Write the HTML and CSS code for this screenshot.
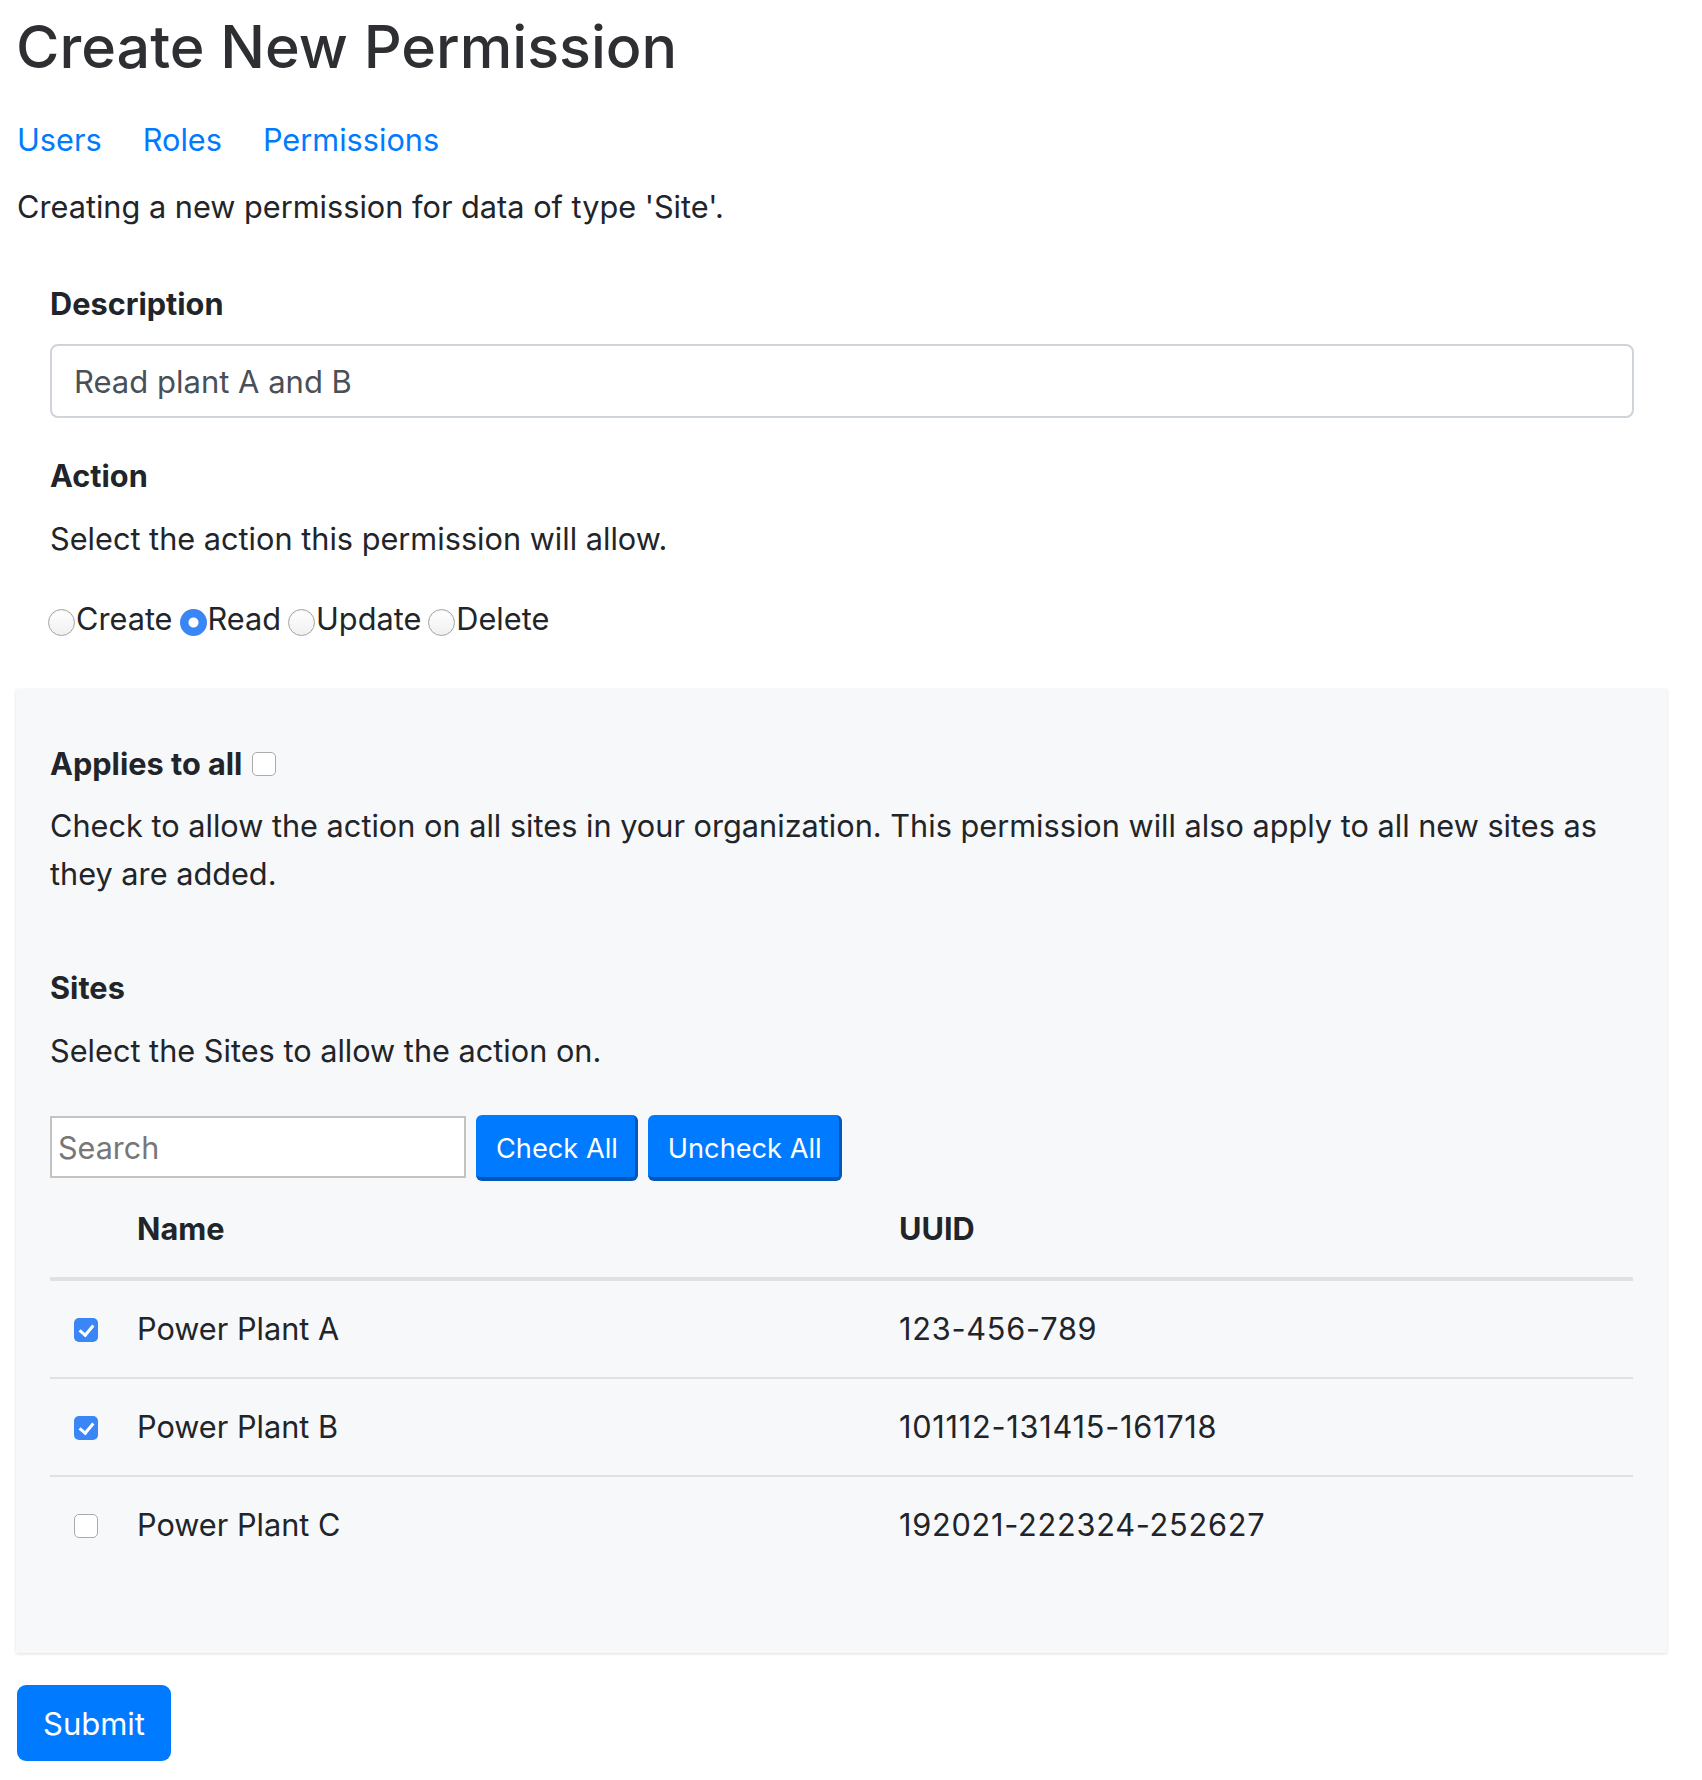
FILE: index.html
```html
<!DOCTYPE html>
<html lang="en">
<head>
<meta charset="utf-8">
<title>Create New Permission</title>
<link rel="stylesheet" href="styles.css">
</head>
<body>
<div class="page">
  <h1 class="title">Create New Permission</h1>
  <nav class="nav">
    <a href="#" class="nav-link">Users</a>
    <a href="#" class="nav-link">Roles</a>
    <a href="#" class="nav-link">Permissions</a>
  </nav>
  <p class="intro">Creating a new permission for data of type 'Site'.</p>

  <form class="form">
    <div class="section">
      <label class="label label-desc" for="desc">Description</label>
      <input id="desc" class="text-input" type="text" value="Read plant A and B">

      <div class="label label-action">Action</div>
      <p class="help">Select the action this permission will allow.</p>
      <div class="radios">
        <label class="radio-label"><input type="radio" name="action" class="radio">Create</label>
        <label class="radio-label"><input type="radio" name="action" class="radio" checked>Read</label>
        <label class="radio-label"><input type="radio" name="action" class="radio">Update</label>
        <label class="radio-label"><input type="radio" name="action" class="radio">Delete</label>
      </div>
    </div>

    <div class="card">
      <label class="label label-applies">Applies to all <input type="checkbox" class="check check-applies"></label>
      <p class="help help-applies">Check to allow the action on all sites in your organization. This permission will also apply to all new sites as they are added.</p>

      <div class="label label-sites">Sites</div>
      <p class="help help-sites">Select the Sites to allow the action on.</p>

      <div class="toolbar">
        <input type="text" class="search" placeholder="Search">
        <button type="button" class="tool-btn">Check All</button>
        <button type="button" class="tool-btn">Uncheck All</button>
      </div>

      <table class="table">
        <thead>
          <tr>
            <th class="col-check"></th>
            <th class="col-name">Name</th>
            <th class="col-uuid">UUID</th>
          </tr>
        </thead>
        <tbody>
          <tr>
            <td class="col-check"><input type="checkbox" class="check" checked></td>
            <td>Power Plant A</td>
            <td class="uuid">123-456-789</td>
          </tr>
          <tr>
            <td class="col-check"><input type="checkbox" class="check" checked></td>
            <td>Power Plant B</td>
            <td class="uuid">101112-131415-161718</td>
          </tr>
          <tr>
            <td class="col-check"><input type="checkbox" class="check"></td>
            <td>Power Plant C</td>
            <td class="uuid">192021-222324-252627</td>
          </tr>
        </tbody>
      </table>
    </div>

    <button type="submit" class="submit">Submit</button>
  </form>
</div>
</body>
</html>
```

FILE: styles.css
```css
* { box-sizing: border-box; }

html, body {
  margin: 0;
  padding: 0;
  background: #fff;
}

body {
  font-family: "Inter", "Helvetica Neue", Arial, sans-serif;
  font-size: 30.7px;
  line-height: 48px;
  color: #212529;
}

.page {
  width: 1667px;
  padding: 11px 0 0 16px;
}

.title {
  margin: 0;
  font-size: 59.2px;
  font-weight: 500;
  line-height: 72px;
  color: #2d2f32;
}

.nav {
  display: flex;
  gap: 41px;
  margin: 33px 0 0 1px;
  height: 48px;
}

.nav-link {
  color: #007bff;
  text-decoration: none;
}

.intro {
  margin: 19px 0 0 1px;
}

.form {
  margin: 0;
}

.section {
  padding: 0 33px 0 34px;
  margin-top: 49px;
}

.label {
  display: block;
  font-weight: 700;
  line-height: 48px;
}

.text-input {
  display: block;
  width: 100%;
  height: 74px;
  margin-top: 16px;
  padding: 0 22px;
  border: 2px solid #ced4da;
  border-radius: 8px;
  font-family: inherit;
  font-size: 31px;
  color: #495057;
  background: #fff;
}

.label-action {
  margin-top: 34px;
}

.help {
  margin: 15px 0 0;
}

.radios {
  display: flex;
  margin-top: 32px;
  height: 48px;
}

.radio-label {
  display: inline-flex;
  align-items: center;
  margin-right: 9px;
}

.radio {
  -webkit-appearance: none;
  appearance: none;
  width: 27px;
  height: 27px;
  margin: 6px 1px 0 -2px;
  border-radius: 50%;
  border: 1.5px solid #a3a3a3;
  background: linear-gradient(#fff, #f0f0f0);
  box-shadow: inset 0 1px 1px rgba(0,0,0,0.05);
  flex: none;
}

.radio:checked {
  border: none;
  background: radial-gradient(circle, #fff 0 4.5px, #3a86f7 5.5px);
}

.card {
  margin-top: 46px;
  padding: 51px 34px 80px;
  background: #f7f8fa;
  box-shadow: 0 1px 3px rgba(0, 0, 0, 0.13);
}

.label-applies {
  display: flex;
  align-items: center;
}

.check {
  -webkit-appearance: none;
  appearance: none;
  width: 24px;
  height: 24px;
  margin: 0;
  border: 1.5px solid #aaa;
  border-radius: 5px;
  background: #fff;
  flex: none;
  position: relative;
  vertical-align: middle;
}

.check:checked {
  border: none;
  background: #3a86f7;
}

.check:checked::after {
  content: "";
  position: absolute;
  left: 8px;
  top: 4px;
  width: 6px;
  height: 11px;
  border: solid #fff;
  border-width: 0 3px 3px 0;
  transform: rotate(40deg);
}

.check-applies {
  margin-left: 10px;
}

.help-applies {
  margin-top: 14px;
}

.label-sites {
  margin-top: 66px;
}

.toolbar {
  display: flex;
  align-items: flex-start;
  gap: 10px;
  margin-top: 40px;
  height: 66px;
}

.search {
  width: 416px;
  height: 62px;
  margin-top: 1px;
  padding: 0 6px;
  border: 2px solid #c3c3c3;
  border-radius: 0;
  background: #fff;
  font-family: inherit;
  font-size: 30.5px;
  color: #212529;
}

.search::placeholder {
  color: #777;
}

.tool-btn {
  height: 66px;
  padding: 5px 17px 0 20px;
  border: 0;
  border-right: 3px solid #0257b8;
  border-bottom: 4px solid #0257b8;
  border-radius: 6px;
  background: #007bff;
  color: #fff;
  font-family: inherit;
  font-size: 27.2px;
  line-height: 1;
}

.table {
  width: 100%;
  border-collapse: collapse;
}

.table th,
.table td {
  padding: 24px;
  line-height: 48px;
  text-align: left;
  vertical-align: middle;
}

.table th {
  font-weight: 700;
  border-bottom: 4px solid #dee2e6;
}

.table td {
  font-weight: 400;
}

.table tbody tr + tr td {
  border-top: 2px solid #dee2e6;
}

.table .col-check {
  width: 63px;
  padding-right: 15px;
}

.table .col-name {
  width: 762px;
}

.table td.col-check {
  padding-top: 0;
  padding-bottom: 0;
}

.table td.col-check .check {
  display: block;
  margin-top: 2px;
}

.uuid {
  letter-spacing: 0.75px;
}

.submit {
  display: block;
  margin-top: 32px;
  margin-left: 1px;
  height: 76px;
  padding: 0 26px;
  border: 0;
  border-radius: 9px;
  background: #007bff;
  color: #fff;
  font-family: inherit;
  font-size: 31px;
}
```
